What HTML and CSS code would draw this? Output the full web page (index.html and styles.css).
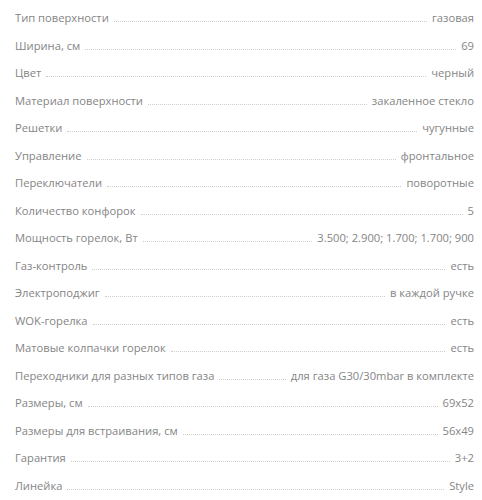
FILE: index.html
```html
<!DOCTYPE html>
<html lang="ru">
<head>
    <meta charset="UTF-8">
    <title>Характеристики</title>
    <link rel="stylesheet" href="styles.css">
</head>
<body>
    <div class="specs">
        <div class="spec-row"><span class="spec-name">Тип поверхности</span><span class="spec-dots"></span><span class="spec-value">газовая</span></div>
        <div class="spec-row"><span class="spec-name">Ширина, см</span><span class="spec-dots"></span><span class="spec-value">69</span></div>
        <div class="spec-row"><span class="spec-name">Цвет</span><span class="spec-dots"></span><span class="spec-value">черный</span></div>
        <div class="spec-row"><span class="spec-name">Материал поверхности</span><span class="spec-dots"></span><span class="spec-value">закаленное стекло</span></div>
        <div class="spec-row"><span class="spec-name">Решетки</span><span class="spec-dots"></span><span class="spec-value">чугунные</span></div>
        <div class="spec-row"><span class="spec-name">Управление</span><span class="spec-dots"></span><span class="spec-value">фронтальное</span></div>
        <div class="spec-row"><span class="spec-name">Переключатели</span><span class="spec-dots"></span><span class="spec-value">поворотные</span></div>
        <div class="spec-row"><span class="spec-name">Количество конфорок</span><span class="spec-dots"></span><span class="spec-value">5</span></div>
        <div class="spec-row"><span class="spec-name">Мощность горелок, Вт</span><span class="spec-dots"></span><span class="spec-value">3.500; 2.900; 1.700; 1.700; 900</span></div>
        <div class="spec-row"><span class="spec-name">Газ-контроль</span><span class="spec-dots"></span><span class="spec-value">есть</span></div>
        <div class="spec-row"><span class="spec-name">Электроподжиг</span><span class="spec-dots"></span><span class="spec-value">в каждой ручке</span></div>
        <div class="spec-row"><span class="spec-name">WOK-горелка</span><span class="spec-dots"></span><span class="spec-value">есть</span></div>
        <div class="spec-row"><span class="spec-name">Матовые колпачки горелок</span><span class="spec-dots"></span><span class="spec-value">есть</span></div>
        <div class="spec-row"><span class="spec-name">Переходники для разных типов газа</span><span class="spec-dots"></span><span class="spec-value">для газа G30/30mbar в комплекте</span></div>
        <div class="spec-row"><span class="spec-name">Размеры, см</span><span class="spec-dots"></span><span class="spec-value">69x52</span></div>
        <div class="spec-row"><span class="spec-name">Размеры для встраивания, см</span><span class="spec-dots"></span><span class="spec-value">56x49</span></div>
        <div class="spec-row"><span class="spec-name">Гарантия</span><span class="spec-dots"></span><span class="spec-value">3+2</span></div>
        <div class="spec-row"><span class="spec-name">Линейка</span><span class="spec-dots"></span><span class="spec-value">Style</span></div>
    </div>
</body>
</html>
```

FILE: styles.css
```css
body{
    margin: 0;
    background-color: #fff;
    font-family: "Open Sans", sans-serif;
}
.specs{
    padding: 4px 8px 0 15px;
}
.spec-row{
    display: flex;
    align-items: baseline;
    height: 27.5px;
    line-height: 27.5px;
    font-size: 11.2px;
    color: #858585;
}
.spec-dots{
    flex: 1;
    margin: 0 5px;
    border-bottom: 1px dotted #cdcdcd;
}
.spec-name,
.spec-value{
    white-space: nowrap;
}
```
